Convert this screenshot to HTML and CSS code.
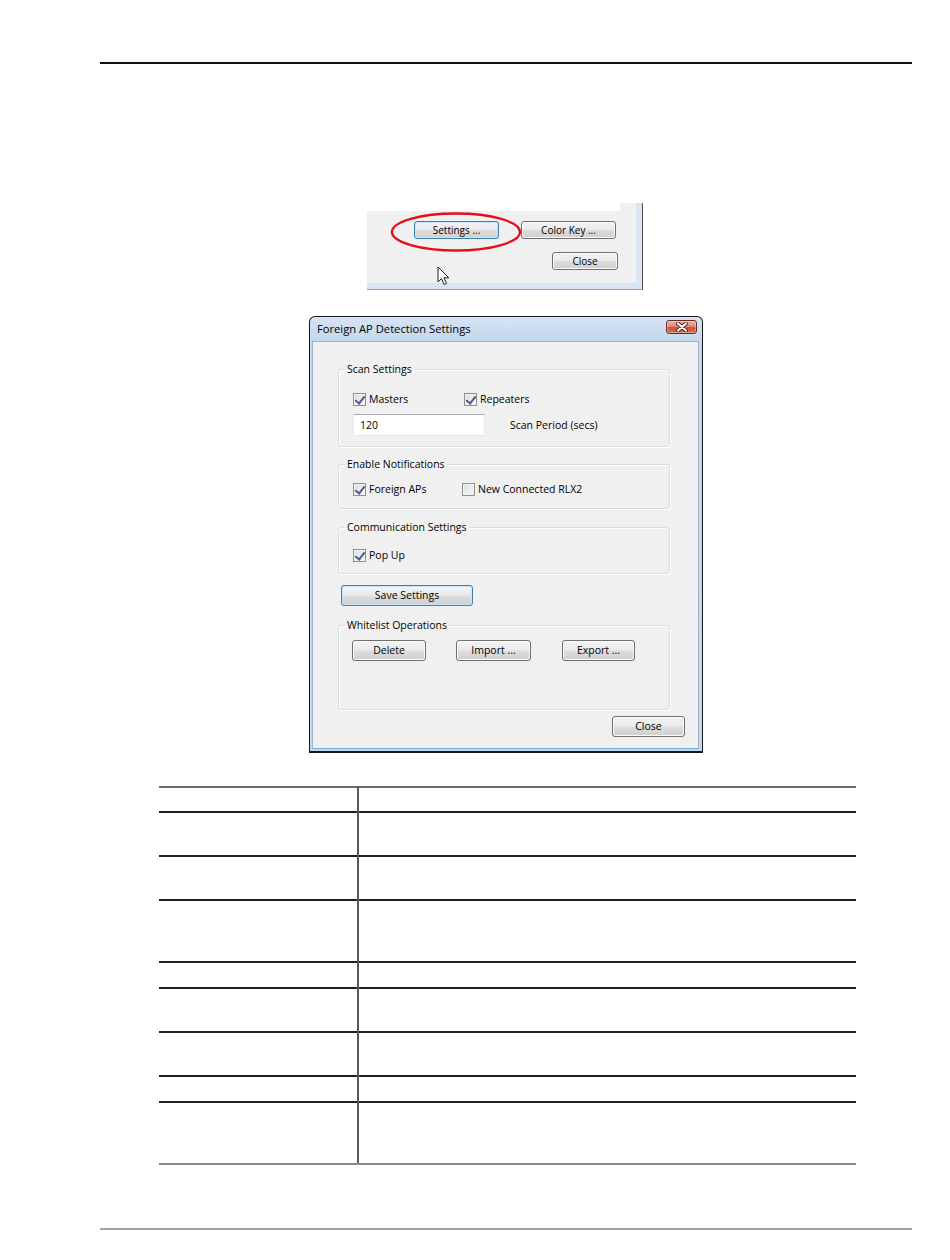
FILE: index.html
```html
<!DOCTYPE html>
<html>
<head>
<meta charset="utf-8">
<link rel="stylesheet" href="styles.css">
</head>
<body>
<div class="hdr-rule"></div>

<div class="snip">
  <div class="snip-in">
    <div class="snip-white"></div>
    <div class="snip-row1">
      <div class="btn sbtn focus w-settings">Settings ...</div>
      <div class="btn sbtn w-colorkey">Color Key ...</div>
    </div>
    <div class="snip-row2">
      <div class="btn sbtn w-sclose">Close</div>
    </div>
  </div>
  <svg class="ellipse" width="132" height="42" viewBox="0 0 132 42"><ellipse cx="66" cy="21" rx="64" ry="18.5" fill="none" stroke="#e3101c" stroke-width="2.4"/></svg>
  <svg class="cursor" width="13" height="20" viewBox="0 0 13 20"><path d="M1 1 L1 16 L4.5 12.6 L7 18.5 L9.5 17.4 L7 11.8 L11.8 11.8 Z" fill="#fff" stroke="#222" stroke-width="1" stroke-linejoin="round"/></svg>
</div>

<div class="dlg">
  <div class="titlebar">
    <span class="title">Foreign AP Detection Settings</span>
    <div class="xbtn">
      <svg width="14" height="10" viewBox="0 0 14 10"><path d="M3 1.5 L11 8.5 M11 1.5 L3 8.5" stroke="#5a1e14" stroke-width="4" stroke-linecap="round"/><path d="M3 1.5 L11 8.5 M11 1.5 L3 8.5" stroke="#fff" stroke-width="2.2" stroke-linecap="round"/></svg>
    </div>
  </div>
  <div class="client">
    <fieldset class="grp g-scan">
      <legend>Scan Settings</legend>
      <div class="row r-scan1">
        <label class="chk w111"><span class="box on"></span>Masters</label>
        <label class="chk"><span class="box on"></span>Repeaters</label>
      </div>
      <div class="row r-scan2">
        <div class="tbox">120</div>
        <span class="lbl-period">Scan Period (secs)</span>
      </div>
    </fieldset>

    <fieldset class="grp g-notif">
      <legend>Enable Notifications</legend>
      <div class="row r-notif">
        <label class="chk w109"><span class="box on"></span>Foreign APs</label>
        <label class="chk"><span class="box"></span>New Connected RLX2</label>
      </div>
    </fieldset>

    <fieldset class="grp g-comm">
      <legend>Communication Settings</legend>
      <div class="row r-comm">
        <label class="chk"><span class="box on"></span>Pop Up</label>
      </div>
    </fieldset>

    <div class="btn focus w-save">Save Settings</div>

    <fieldset class="grp g-white">
      <legend>Whitelist Operations</legend>
      <div class="row r-white">
        <div class="btn w-delete">Delete</div>
        <div class="btn w-import">Import ...</div>
        <div class="btn w-export">Export ...</div>
      </div>
    </fieldset>

    <div class="close-row">
      <div class="btn w-close">Close</div>
    </div>
  </div>
</div>

<table class="spec">
  <tr class="h25"><td class="c1"></td><td class="c2"></td></tr>
  <tr class="h44"><td class="c1"></td><td class="c2"></td></tr>
  <tr class="h44"><td class="c1"></td><td class="c2"></td></tr>
  <tr class="h62"><td class="c1"></td><td class="c2"></td></tr>
  <tr class="h26"><td class="c1"></td><td class="c2"></td></tr>
  <tr class="h44"><td class="c1"></td><td class="c2"></td></tr>
  <tr class="h44"><td class="c1"></td><td class="c2"></td></tr>
  <tr class="h26"><td class="c1"></td><td class="c2"></td></tr>
  <tr class="h62 last"><td class="c1"></td><td class="c2"></td></tr>
</table>

<div class="ftr-rule"></div>
</body>
</html>
```

FILE: styles.css
```css
* { box-sizing: border-box; }
html, body { margin: 0; padding: 0; background: #fff; }
body {
  font-family: "Open Sans", "Noto Sans", "Liberation Sans", sans-serif;
  font-size: 10.5px;
  color: #000;
  width: 950px;
  height: 1260px;
  overflow: hidden;
}

.hdr-rule {
  margin: 62px 0 0 100px;
  width: 812px;
  height: 2px;
  background: #111;
}

/* ---------- buttons ---------- */
.btn {
  display: flex;
  align-items: center;
  justify-content: center;
  height: 21px;
  border: 1px solid #707070;
  border-radius: 3px;
  background: linear-gradient(#f3f3f3 0%, #ebebeb 48%, #dddddd 52%, #cfcfcf 100%);
  box-shadow: inset 0 0 0 1px #fbfbfb;
  color: #000;
  white-space: nowrap;
  line-height: 1;
}
.btn.focus {
  border-color: #3c7fb1;
  box-shadow: inset 0 0 0 1px #c5e6fb;
}

/* ---------- top snippet ---------- */
.snip {
  position: relative;
  margin: 139px 0 0 367px;
  width: 276px;
  height: 87px;
  background: #d9e5f3;
  border-right: 1px solid #4a4a4a;
  border-bottom: 1px solid #9c9c9c;
  padding: 0 6px 6px 0;
}
.snip-in { height: 100%; background: #f0f0f0; }
.snip-white { width: 253px; height: 8px; background: #fff; }
.snip-row1 { display: flex; gap: 22px; padding-left: 47px; margin-top: 10px; }
.snip-row2 { display: flex; padding-left: 185px; margin-top: 13px; }
.btn.sbtn { height: 18px; font-size: 10px; }
.w-settings { width: 85px; }
.w-colorkey { width: 95px; }
.w-sclose { width: 66px; }

.ellipse { position: absolute; left: 23px; top: 8px; }
.cursor { position: absolute; left: 70px; top: 63px; }

.btn.w-save { width: 132px; margin: 11px 0 0 3px; }
.w-delete { width: 74px; }
.w-import { width: 75px; }
.w-export { width: 73px; }
.w-close { width: 73px; }

/* ---------- dialog ---------- */
.dlg {
  margin: 26px 0 0 309px;
  width: 394px;
  height: 437px;
  border: 1px solid #161616;
  border-bottom-width: 2px;
  border-radius: 6px 6px 0 0;
  background: linear-gradient(#d6e4f5 0px, #c2d6ee 26px, #c4d7ee 100%);
  padding: 0 3px 2px 2px;
  display: flex;
  flex-direction: column;
}
.titlebar {
  height: 24px;
  display: flex;
  justify-content: space-between;
  align-items: flex-start;
  padding: 0 2px 0 5px;
}
.title {
  font-size: 11.2px;
  line-height: 24px;
  color: #000;
}
.xbtn {
  margin-top: 3px;
  width: 31px;
  height: 14px;
  border: 1px solid #6a2b20;
  border-radius: 3px;
  background: linear-gradient(#eab3a6 0%, #d88a79 45%, #c8533b 55%, #d4704f 100%);
  box-shadow: inset 0 0 0 1px rgba(255,255,255,0.35);
  display: flex;
  align-items: center;
  justify-content: center;
}
.client {
  flex: 1;
  background: #f0f0f0;
  border: 1px solid #9fb3cb;
  border-bottom-color: #6fb2d4;
  padding: 20px 28px 0 25px;
  display: flex;
  flex-direction: column;
}

/* ---------- group boxes ---------- */
.grp {
  margin: 0;
  min-width: 0;
  border: 1px solid #d5dfe5;
  border-radius: 3px;
  box-shadow: inset 1px 1px 0 #fff, 1px 1px 0 #fff;
  padding: 0 10px 10px 6px;
}
.grp legend {
  padding: 0 2px;
  line-height: 14px;
  font-size: 10.5px;
}
.g-notif { margin-top: 10px; padding-bottom: 12px; }
.g-comm { margin-top: 11px; padding-bottom: 11px; }
.g-white { margin-top: 12px; padding-bottom: 48px; }

.row { display: flex; align-items: center; padding-left: 8px; }
.r-scan1 { margin-top: 16px; height: 14px; }
.r-scan2 { margin-top: 8px; }
.r-notif { margin-top: 11px; height: 14px; }
.r-comm { margin-top: 14px; height: 14px; }
.r-white { margin-top: 8px; padding-left: 7px; gap: 30px; }
.r-white .w-export { margin-left: 1px; }

.chk { display: flex; align-items: center; white-space: nowrap; }
.w111 { width: 111px; }
.w109 { width: 109px; }
.box {
  width: 13px;
  height: 13px;
  margin-right: 3px;
  border: 1px solid #8e8f8f;
  background: linear-gradient(135deg, #dcdcdc, #fbfbfb);
  box-shadow: inset 0 0 0 1px #f4f4f4;
  position: relative;
  flex: none;
}
.box.on::after {
  content: "";
  position: absolute;
  left: 3px;
  top: 0px;
  width: 4px;
  height: 8px;
  border-right: 2px solid #4a5d8f;
  border-bottom: 2px solid #4a5d8f;
  transform: rotate(38deg);
}

.tbox {
  width: 132px;
  height: 22px;
  background: #fff;
  border: 1px solid #e3e9ef;
  border-top-color: #abadb3;
  padding-left: 6px;
  line-height: 20px;
}
.lbl-period { margin-left: 25px; }

.close-row {
  display: flex;
  justify-content: flex-end;
  margin: 6px -15px 0 0;
}

/* ---------- table ---------- */
.spec {
  margin: 33px 0 0 159px;
  width: 697px;
  border-collapse: collapse;
  table-layout: fixed;
}
.spec td {
  padding: 0;
  border-top: 2px solid #1f1f1f;
}
.spec tr:first-child td { border-top: 2px solid #6b6b6b; }
.spec tr.last td { border-bottom: 2px solid #8a8a8a; }
.spec .c1 { width: 199px; border-right: 2px solid #5a5a5a; }
.h25 { height: 25px; }
.h26 { height: 26px; }
.h44 { height: 44px; }
.h62 { height: 62px; }

.ftr-rule {
  margin: 63px 0 0 100px;
  width: 812px;
  height: 2px;
  background: #a2a2a2;
}
```
